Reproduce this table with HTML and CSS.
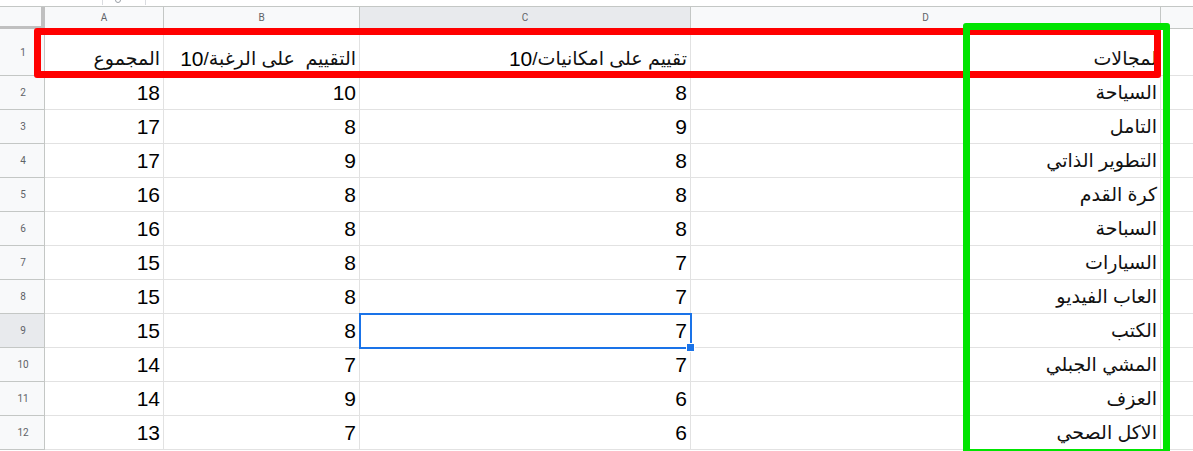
FILE: index.html
```html
<!DOCTYPE html>
<html lang="ar">
<head>
<meta charset="utf-8">
<title>Sheet</title>
<link rel="stylesheet" href="styles.css">
</head>
<body>
<div class="page">
  <div class="strip"><div class="strip-frag"><span class="strip-g"></span></div></div>
  <div class="sheet">
    <div class="corner"></div>
    <div class="colhdr">A</div>
    <div class="colhdr">B</div>
    <div class="colhdr sel">C</div>
    <div class="colhdr">D</div>
    <div class="colhdr last"></div>

    <div class="rowhdr">1</div>
    <div class="cell txt">المجموع</div>
    <div class="cell txt">التقييم  على الرغبة/<span class="num">10</span></div>
    <div class="cell txt">تقييم على امكانيات/<span class="num">10</span></div>
    <div class="cell txt">لمجالات</div>
    <div class="cell last"></div>

    <div class="rowhdr">2</div>
    <div class="cell">18</div><div class="cell">10</div><div class="cell">8</div><div class="cell txt">السياحة</div><div class="cell last"></div>
    <div class="rowhdr">3</div>
    <div class="cell">17</div><div class="cell">8</div><div class="cell">9</div><div class="cell txt">التامل</div><div class="cell last"></div>
    <div class="rowhdr">4</div>
    <div class="cell">17</div><div class="cell">9</div><div class="cell">8</div><div class="cell txt">التطوير الذاتي</div><div class="cell last"></div>
    <div class="rowhdr">5</div>
    <div class="cell">16</div><div class="cell">8</div><div class="cell">8</div><div class="cell txt">كرة القدم</div><div class="cell last"></div>
    <div class="rowhdr">6</div>
    <div class="cell">16</div><div class="cell">8</div><div class="cell">8</div><div class="cell txt">السباحة</div><div class="cell last"></div>
    <div class="rowhdr">7</div>
    <div class="cell">15</div><div class="cell">8</div><div class="cell">7</div><div class="cell txt">السيارات</div><div class="cell last"></div>
    <div class="rowhdr">8</div>
    <div class="cell">15</div><div class="cell">8</div><div class="cell">7</div><div class="cell txt">العاب الفيديو</div><div class="cell last"></div>
    <div class="rowhdr sel">9</div>
    <div class="cell">15</div><div class="cell">8</div><div class="cell active">7</div><div class="cell txt">الكتب</div><div class="cell last"></div>
    <div class="rowhdr">10</div>
    <div class="cell">14</div><div class="cell">7</div><div class="cell">7</div><div class="cell txt">المشي الجبلي</div><div class="cell last"></div>
    <div class="rowhdr">11</div>
    <div class="cell">14</div><div class="cell">9</div><div class="cell">6</div><div class="cell txt">العزف</div><div class="cell last"></div>
    <div class="rowhdr">12</div>
    <div class="cell">13</div><div class="cell">7</div><div class="cell">6</div><div class="cell txt">الاكل الصحي</div><div class="cell last"></div>
  </div>
  <div class="mark mark-red"></div>
  <div class="mark mark-green"></div>
</div>
</body>
</html>
```

FILE: styles.css
```css
* { box-sizing: border-box; }
html, body { margin: 0; padding: 0; background: #ffffff; }
body { overflow: hidden; }

.page {
  position: relative;
  width: 1193px;
  height: 451px;
  overflow: hidden;
  font-family: "Liberation Sans", Arial, "DejaVu Sans", sans-serif;
}

.strip {
  height: 6px;
  display: flex;
  align-items: flex-start;
  overflow: hidden;
}
.strip-frag {
  margin-left: 102px;
  width: 44px;
  height: 5px;
  border-left: 1px solid #dadce0;
  border-right: 1px solid #dadce0;
  overflow: hidden;
}
.strip-g {
  display: block;
  margin: -3px 0 0 12px;
  width: 6px;
  height: 6px;
  border: 1px solid #9aa0a6;
  border-radius: 50%;
}

.sheet {
  display: grid;
  grid-template-columns: 45px 119px 196px 331px 470px 1fr;
  grid-template-rows: 22px 47px repeat(11, 34px);
  border-top: 1px solid #c4c7c5;
}

.corner {
  background: #f8f9fa;
  border-right: 4px solid #c0c0c0;
  border-bottom: 3px solid #c0c0c0;
}

.colhdr {
  background: #f8f9fa;
  border-right: 1px solid #c4c7c5;
  border-bottom: 1px solid #c4c7c5;
  color: #5f6368;
  font-family: Roboto, "Liberation Sans", Arial, sans-serif;
  font-size: 10px;
  display: flex;
  align-items: center;
  justify-content: center;
}
.colhdr.sel { background: #e8eaed; }
.colhdr.last { border-right: none; }

.rowhdr {
  background: #f8f9fa;
  border-right: 1px solid #c4c7c5;
  border-bottom: 1px solid #c4c7c5;
  color: #5f6368;
  font-family: Roboto, "Liberation Sans", Arial, sans-serif;
  font-size: 10px;
  display: flex;
  align-items: center;
  justify-content: center;
  padding-left: 2px;
}
.rowhdr.sel { background: #e8eaed; }

.cell {
  border-right: 1px solid #e2e2e2;
  border-bottom: 1px solid #e2e2e2;
  color: #000000;
  font-size: 21px;
  line-height: 24px;
  white-space: pre;
  overflow: hidden;
  display: flex;
  align-items: flex-end;
  justify-content: flex-end;
  padding: 0 3px 4px 3px;
}
.cell.txt {
  direction: rtl;
  justify-content: flex-start;
  font-size: 19px;
  font-weight: normal;
  color: #111111;
}
.cell.txt .num { font-size: 21px; color: #000000; }
.cell.last { border-right: none; }

.cell.active { position: relative; overflow: visible; }
.cell.active::before {
  content: "";
  position: absolute;
  left: -1px;
  top: -1px;
  right: -2px;
  bottom: -2px;
  border: 2px solid #1a73e8;
  pointer-events: none;
}
.cell.active::after {
  content: "";
  position: absolute;
  right: -5px;
  bottom: -5px;
  width: 7px;
  height: 7px;
  background: #1a73e8;
  border: 1px solid #ffffff;
}

.mark {
  position: absolute;
  border-style: solid;
  border-width: 7px;
  border-radius: 3px;
  pointer-events: none;
}
.mark-red {
  left: 34px;
  top: 28px;
  width: 1127px;
  height: 50px;
  border-color: #ff0000;
}
.mark-green {
  left: 963px;
  top: 23px;
  width: 207px;
  height: 433px;
  border-color: #00e400;
}
```
